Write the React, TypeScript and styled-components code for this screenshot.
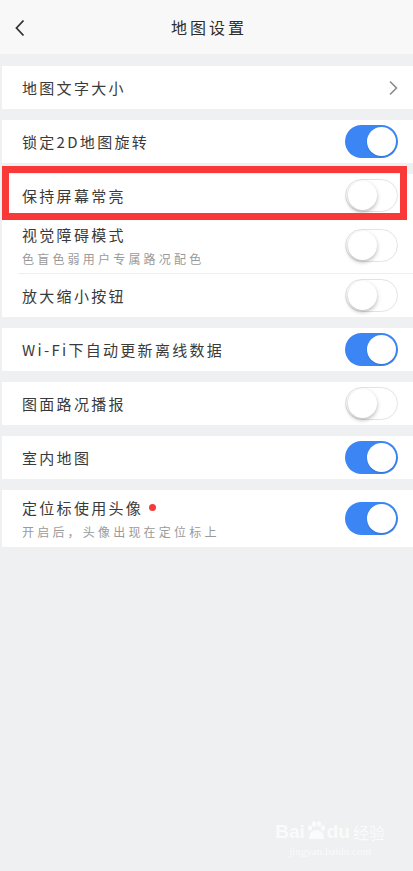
import React, { ReactElement } from "react";
import styled, { createGlobalStyle } from "styled-components";

const colors = {
  page: "#eef0f1",
  header: "#f8f8f8",
  card: "#ffffff",
  text: "#3a3a3a",
  sub: "#9a9a9a",
  blue: "#3b86f4",
  red: "#f53a3a",
  line: "#eeeeee"
};

const GlobalStyle = createGlobalStyle`
  html, body {
    margin: 0;
    padding: 0;
    background: ${colors.page};
  }
  body {
    font-family: "Noto Sans CJK SC", "Noto Sans", sans-serif;
    color: ${colors.text};
  }
`;

const Page = styled.div`
  position: relative;
  width: 413px;
  min-height: 871px;
  background: ${colors.page};
  overflow: hidden;
`;

const Header = styled.div`
  height: 54px;
  background: ${colors.header};
  display: flex;
  align-items: center;
  justify-content: center;
  position: relative;
`;

const BackButton = styled.div`
  position: absolute;
  left: 14px;
  top: 19px;
  width: 16px;
  height: 20px;
  display: flex;
`;

const Title = styled.div`
  font-size: 16px;
  letter-spacing: 3px;
  padding-left: 5px;
  color: #2d2d2d;
`;

const List = styled.div`
  display: flex;
  flex-direction: column;
  gap: 11px;
  padding-top: 12px;
  padding-left: 2px;
`;

const Card = styled.div`
  background: ${colors.card};
  display: flex;
  flex-direction: column;
`;

const Row = styled.div<{ $tall?: boolean; $divider?: boolean }>`
  position: relative;
  height: ${p => (p.$tall ? 57 : 43)}px;
  display: flex;
  align-items: center;
  justify-content: space-between;
  padding: 0 15px 0 20px;
  box-sizing: border-box;
  &::after {
    content: "";
    display: ${p => (p.$divider ? "block" : "none")};
    position: absolute;
    left: 16px;
    right: 0;
    bottom: 0;
    height: 1px;
    background: ${colors.line};
  }
`;

const Labels = styled.div`
  display: flex;
  flex-direction: column;
  gap: 8px;
`;

const Label = styled.div`
  font-size: 15px;
  line-height: 18px;
  letter-spacing: 2.3px;
  color: ${colors.text};
  display: flex;
  align-items: center;
`;

const SubLabel = styled.div`
  font-size: 12px;
  line-height: 14px;
  letter-spacing: 3.2px;
  color: ${colors.sub};
`;

const Dot = styled.span`
  width: 7px;
  height: 7px;
  border-radius: 50%;
  background: ${colors.red};
  margin-left: 6px;
  margin-top: -1px;
`;

const Track = styled.div<{ $on: boolean }>`
  width: 53px;
  height: 33px;
  border-radius: 17px;
  box-sizing: border-box;
  background: ${p => (p.$on ? colors.blue : "#ffffff")};
  border: ${p => (p.$on ? "none" : "1.5px solid #e3e3e3")};
  display: flex;
  align-items: center;
  justify-content: ${p => (p.$on ? "flex-end" : "flex-start")};
  padding: 0 2px;
`;

const Knob = styled.div<{ $on: boolean }>`
  width: 29px;
  height: 29px;
  border-radius: 50%;
  background: #ffffff;
  box-shadow: ${p =>
    p.$on ? "0 1px 2px rgba(0,0,0,0.15)" : "0 2px 4px rgba(0,0,0,0.28)"};
`;

const Highlight = styled.div`
  position: absolute;
  left: 0;
  top: -8px;
  width: 405px;
  height: 54px;
  box-sizing: border-box;
  border: 7px solid #f93838;
  pointer-events: none;
`;

const Watermark = styled.div`
  position: absolute;
  right: 28px;
  bottom: 14px;
  display: flex;
  flex-direction: column;
  align-items: center;
  color: #fafbfb;
`;

const MarkTop = styled.div`
  display: flex;
  align-items: flex-end;
  font-family: "Liberation Sans", sans-serif;
  font-weight: 700;
  font-size: 19px;
  line-height: 20px;
`;

const MarkCn = styled.span`
  font-family: "Noto Sans CJK SC", sans-serif;
  font-size: 16px;
  font-weight: 400;
  margin-left: 3px;
`;

const MarkUrl = styled.div`
  font-family: "Liberation Serif", serif;
  font-size: 11px;
  margin-top: 3px;
`;

function Toggle({ on }: { on: boolean }): ReactElement {
  return (
    <Track $on={on}>
      <Knob $on={on} />
    </Track>
  );
}

function Chevron(): ReactElement {
  return (
    <svg width="10" height="16" viewBox="0 0 10 16">
      <path d="M2 1.5 L8.5 8 L2 14.5" fill="none" stroke="#8a8a8a" strokeWidth="1.6" />
    </svg>
  );
}

interface Item {
  label: string;
  sub?: string;
  toggle?: boolean;
  arrow?: boolean;
  dot?: boolean;
  highlight?: boolean;
}

const sections: Item[][] = [
  [{ label: "地图文字大小", arrow: true }],
  [{ label: "锁定2D地图旋转", toggle: true }],
  [
    { label: "保持屏幕常亮", toggle: false, highlight: true },
    { label: "视觉障碍模式", sub: "色盲色弱用户专属路况配色", toggle: false },
    { label: "放大缩小按钮", toggle: false }
  ],
  [{ label: "Wi-Fi下自动更新离线数据", toggle: true }],
  [{ label: "图面路况播报", toggle: false }],
  [{ label: "室内地图", toggle: true }],
  [{ label: "定位标使用头像", sub: "开启后，头像出现在定位标上", toggle: true, dot: true }]
];

export default function App(): ReactElement {
  return (
    <Page>
      <GlobalStyle />
      <Header>
        <BackButton>
          <svg width="12" height="18" viewBox="0 0 12 18">
            <path d="M9.5 1.5 L2.5 9 L9.5 16.5" fill="none" stroke="#333" strokeWidth="1.8" />
          </svg>
        </BackButton>
        <Title>地图设置</Title>
      </Header>
      <List>
        {sections.map((items, si) => (
          <Card key={si}>
            {items.map((item, ii) => (
              <Row key={item.label} $tall={!!item.sub} $divider={ii === 1 && items.length > 2}>
                <Labels>
                  <Label>
                    {item.label}
                    {item.dot && <Dot />}
                  </Label>
                  {item.sub && <SubLabel>{item.sub}</SubLabel>}
                </Labels>
                {item.arrow && <Chevron />}
                {item.toggle !== undefined && <Toggle on={item.toggle} />}
                {item.highlight && <Highlight />}
              </Row>
            ))}
          </Card>
        ))}
      </List>
      <Watermark>
        <MarkTop>
          Bai
          <svg width="22" height="22" viewBox="0 0 22 22">
            <ellipse cx="5" cy="8" rx="2.2" ry="2.8" fill="#fafbfb" />
            <ellipse cx="9" cy="4" rx="2.2" ry="2.8" fill="#fafbfb" />
            <ellipse cx="14" cy="4" rx="2.2" ry="2.8" fill="#fafbfb" />
            <ellipse cx="18" cy="8" rx="2.2" ry="2.8" fill="#fafbfb" />
            <path d="M4 19 C4 12 8 10 11.5 10 C15 10 19 12 19 19 Z" fill="#fafbfb" />
          </svg>
          du
          <MarkCn>经验</MarkCn>
        </MarkTop>
        <MarkUrl>jingyan.baidu.com</MarkUrl>
      </Watermark>
    </Page>
  );
}
